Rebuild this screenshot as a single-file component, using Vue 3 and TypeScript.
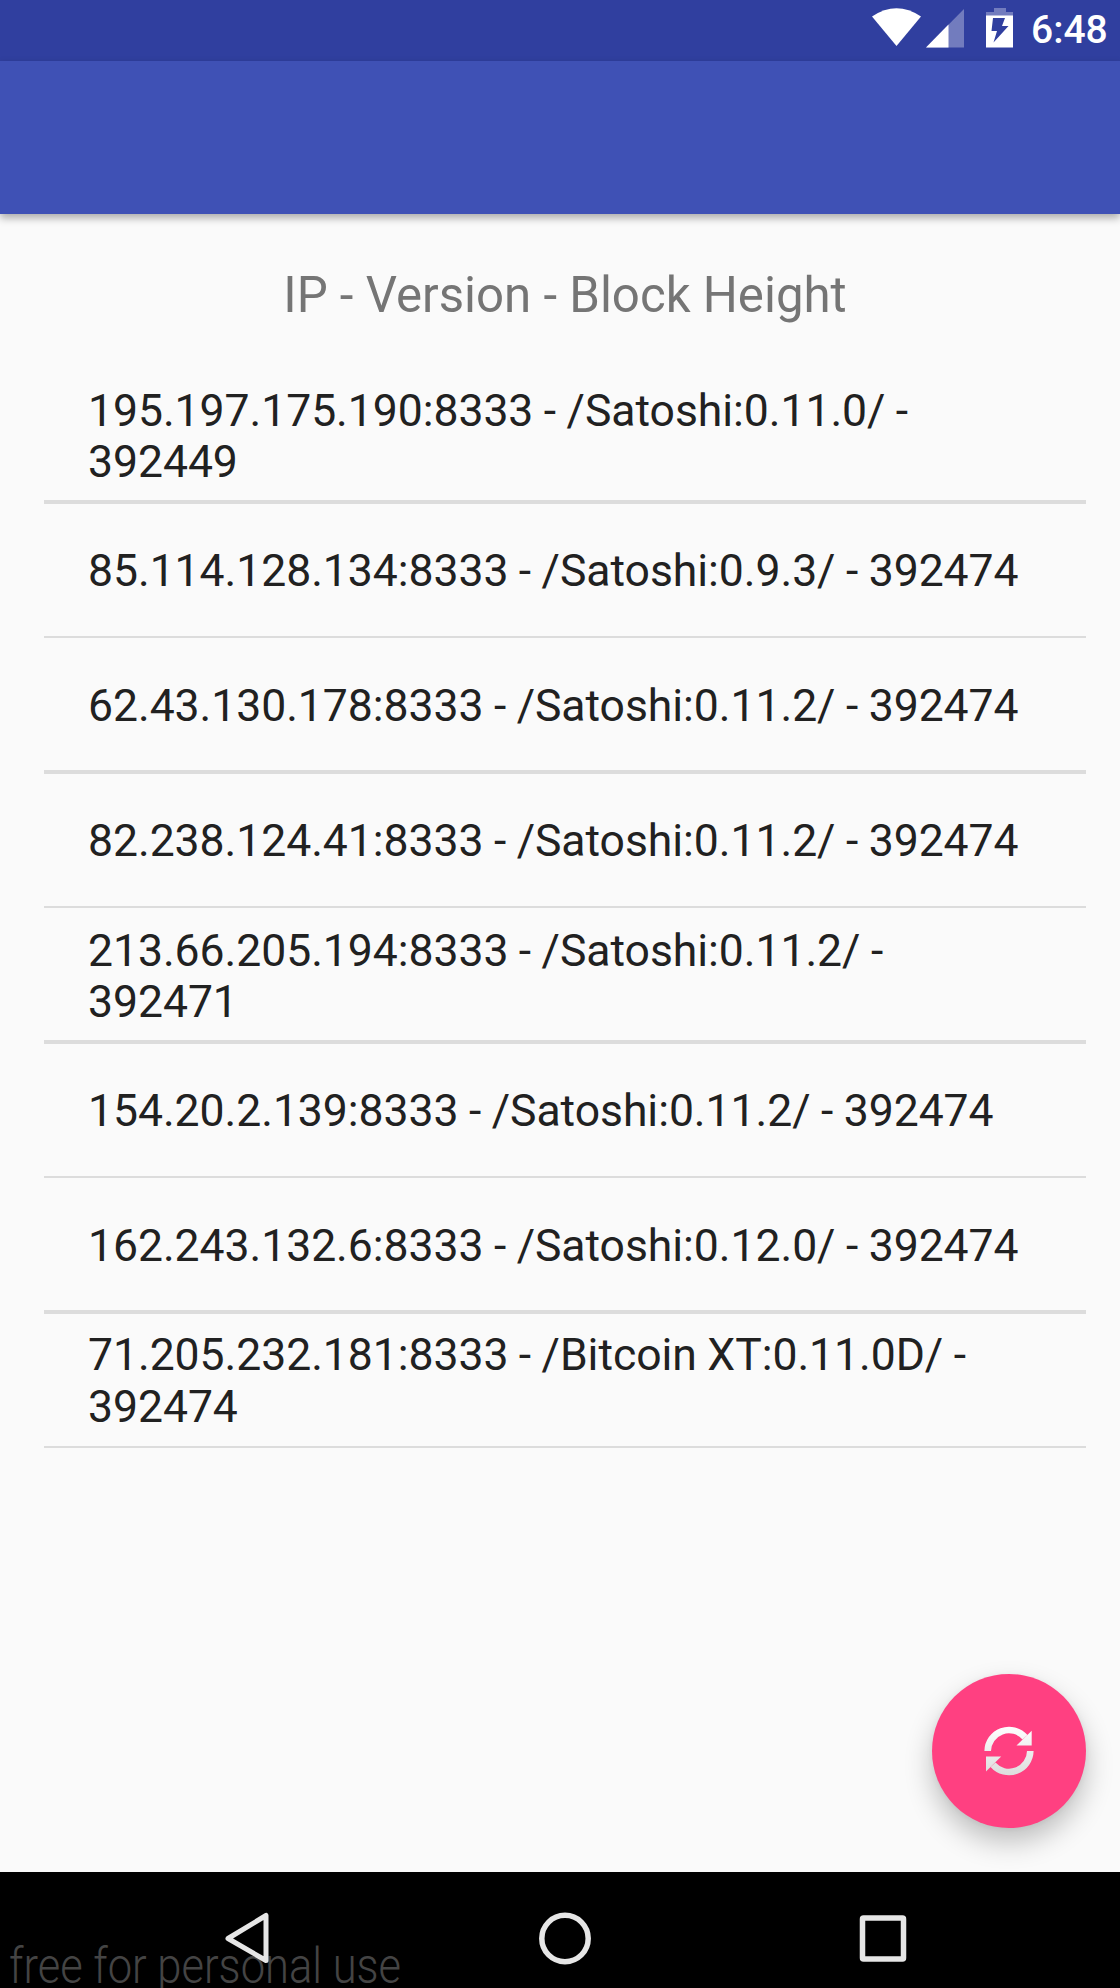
<script setup lang="ts">
interface Peer {
  address: string
  version: string
  height: number
}

const peers: Peer[] = [
  { address: '195.197.175.190:8333', version: '/Satoshi:0.11.0/', height: 392449 },
  { address: '85.114.128.134:8333', version: '/Satoshi:0.9.3/', height: 392474 },
  { address: '62.43.130.178:8333', version: '/Satoshi:0.11.2/', height: 392474 },
  { address: '82.238.124.41:8333', version: '/Satoshi:0.11.2/', height: 392474 },
  { address: '213.66.205.194:8333', version: '/Satoshi:0.11.2/', height: 392471 },
  { address: '154.20.2.139:8333', version: '/Satoshi:0.11.2/', height: 392474 },
  { address: '162.243.132.6:8333', version: '/Satoshi:0.12.0/', height: 392474 },
  { address: '71.205.232.181:8333', version: '/Bitcoin XT:0.11.0D/', height: 392474 },
]
</script>

<template>
  <div class="screen">
    <header class="status">
      <svg class="status-icons" width="156" height="61" viewBox="0 0 156 61">
        <path d="M0 16.5 Q24.5 0 49 16.5 L24.5 46 Z" fill="#fff" />
        <path d="M54 47.500 L92 9 V47.500 Z" fill="#fff" fill-opacity=".32" />
        <path d="M54 47.500 L76.500 24.500 V47.500 Z" fill="#fff" />
        <path d="M122 8 h12 v4 h7 v4 h-27 v-4 h8 Z" fill="#fff" fill-opacity=".32" />
        <path fill-rule="evenodd" d="M114 15.500 H141 V47.500 H114 Z M121 18 H133 L130 26 H136.500 L121.500 42.500 L125 31 H119.500 Z" fill="#fff" />
      </svg>
      <span class="clock">6:48</span>
    </header>
    <div class="appbar"></div>
    <main class="content">
      <h1 class="title">IP - Version - Block Height</h1>
      <ul class="list">
        <li v-for="peer in peers" :key="peer.address" class="row">
          <span>{{ peer.address }} - {{ peer.version }} - {{ peer.height }}</span>
        </li>
      </ul>
      <button class="fab" aria-label="Refresh">
        <svg width="50" height="50" viewBox="0 0 50 50">
          <defs>
            <linearGradient id="shade" x1="0" y1="0" x2="0" y2="50" gradientUnits="userSpaceOnUse">
              <stop offset="0" stop-color="#fff" />
              <stop offset="1" stop-color="#dcdcdc" />
            </linearGradient>
          </defs>
          <g stroke="url(#shade)" stroke-width="6.600" fill="none">
            <path d="M3.700 25 A21.300 21.300 0 0 1 41 11.200" />
            <path d="M46.300 25 A21.300 21.300 0 0 1 9 38.800" />
          </g>
          <g fill="url(#shade)">
            <path d="M47.700 4.700 V19.500 H32.500 Z" />
            <path d="M2 45.500 V30.500 H17.200 Z" />
          </g>
        </svg>
      </button>
    </main>
    <footer class="nav">
      <span class="watermark">free for personal use</span>
      <svg class="nav-icons" width="1120" height="116" viewBox="0 0 1120 116" fill="none" stroke="#e6e6e6">
        <path d="M266 43.500 V88.500 L228 66.500 Z" stroke-width="5" stroke-linejoin="round" />
        <circle cx="565" cy="66.500" r="23.200" stroke-width="5.500" />
        <rect x="862.500" y="46" width="41" height="41" rx="1" stroke-width="5.500" />
      </svg>
    </footer>
  </div>
</template>

<style>
body {
  margin: 0;
}
</style>

<style scoped>
.screen {
  display: flex;
  flex-direction: column;
  width: 1120px;
  height: 1988px;
  overflow: hidden;
  background: #fafafa;
  font-family: Roboto, "Noto Sans", sans-serif;
}
.status {
  display: flex;
  justify-content: flex-end;
  flex: 0 0 61px;
  box-sizing: border-box;
  padding-right: 13px;
  background: #303f9f;
}
.status-icons {
  margin-right: 3px;
}
.clock {
  width: 76px;
  font-size: 39px;
  font-weight: 500;
  line-height: 61px;
  color: #fff;
  white-space: nowrap;
}
.appbar {
  flex: 0 0 153px;
  background: #3f51b5;
  box-shadow: 0 4px 8px rgba(0, 0, 0, 0.32);
  z-index: 1;
}
.content {
  position: relative;
  flex: 1;
  padding: 51px 34px 0 44px;
}
.title {
  margin: 0;
  height: 60px;
  font-size: 49.2px;
  font-weight: 400;
  line-height: 60px;
  text-align: center;
  color: #757575;
}
.list {
  margin: 43px 0 0;
  padding: 0;
  list-style: none;
}
.row {
  display: flex;
  align-items: center;
  box-sizing: border-box;
  height: 134px;
  padding: 3px 44px 0;
  border-bottom: 2px solid #dcdcdc;
  font-size: 44.5px;
  line-height: 51.3px;
  letter-spacing: -0.04px;
  word-spacing: -0.5px;
  color: #212121;
}
.row:nth-child(odd) {
  height: 136px;
  padding-top: 6px;
  border-bottom-width: 4px;
}
.fab {
  position: absolute;
  right: 34px;
  bottom: 44px;
  display: flex;
  align-items: center;
  justify-content: center;
  width: 154px;
  height: 154px;
  padding: 0;
  border: 0;
  border-radius: 50%;
  background: #ff4081;
  box-shadow: 0 14px 28px rgba(0, 0, 0, 0.24), 0 1px 6px rgba(0, 0, 0, 0.06);
}
.nav {
  position: relative;
  flex: 0 0 116px;
  overflow: hidden;
  background: #000;
}
.nav-icons {
  position: relative;
  display: block;
}
.watermark {
  position: absolute;
  left: 9px;
  top: 65px;
  font-size: 50px;
  font-weight: 300;
  line-height: 58px;
  white-space: nowrap;
  color: #444;
  transform: scaleX(0.87);
  transform-origin: left;
}
</style>
